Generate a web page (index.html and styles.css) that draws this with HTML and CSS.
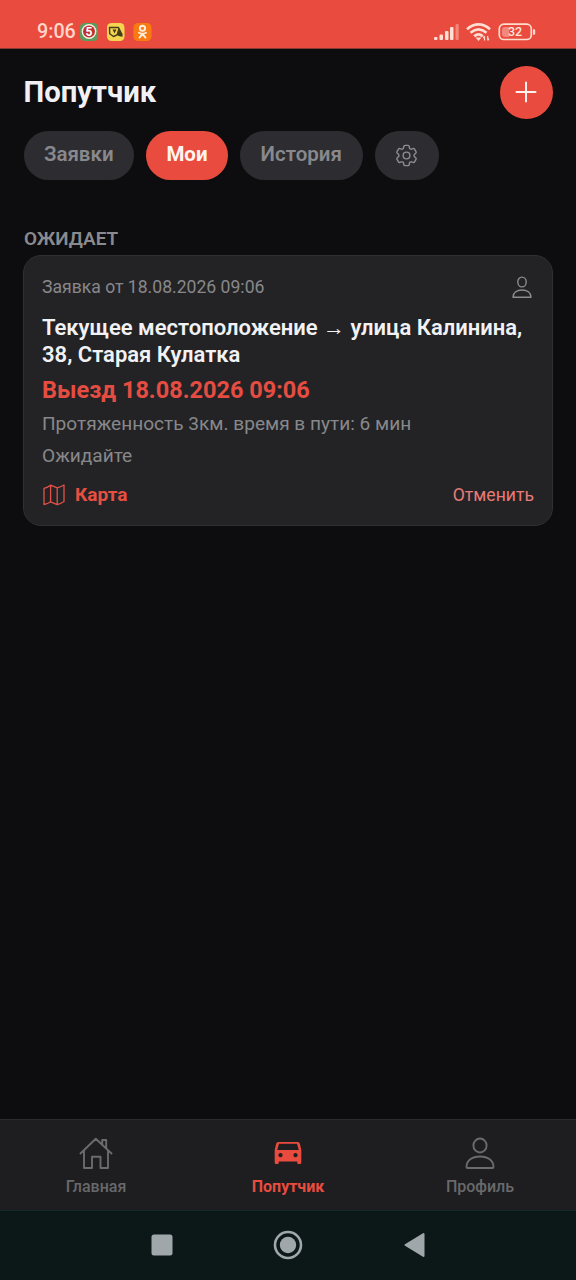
FILE: index.html
```html
<!DOCTYPE html>
<html lang="ru">
<head>
<meta charset="utf-8">
<title>Попутчик</title>
<link rel="stylesheet" href="styles.css">
</head>
<body>
<div class="screen">
  <div class="status">
    <span class="clock">9:06</span>
    <svg class="notices" width="72" height="18" viewBox="0 0 72 18">
      <rect width="18" height="18" rx="4.500" fill="#5c9a5d"/>
      <circle cx="9" cy="8.500" r="7.400" fill="#fbeede"/>
      <circle cx="9" cy="8.500" r="6" fill="#bd3034"/>
      <text x="9" y="12.800" class="five">5</text>
      <rect x="27" width="17.500" height="18" rx="4.500" fill="#f5d550"/>
      <path d="M29.500 4.500h9l3.500 7-5 .3-3.500 1.700-3.800-2.700z" fill="none" stroke="#443d16" stroke-width="1.400" stroke-linejoin="round"/>
      <path d="M38.500 5l4.500 8.500h-3l-3.500-2zM32.500 6.500h4l-2 4z" fill="#443d16"/>
      <rect x="53.500" width="18" height="18" rx="4.500" fill="#f97a12"/>
      <circle cx="62.500" cy="5.300" r="2.600" fill="none" stroke="#fff0df" stroke-width="1.900"/>
      <path d="M59 9.800q3.500 2 7 0M62.500 11l-3 3.600M62.500 11l3 3.600" fill="none" stroke="#fff0df" stroke-width="1.900" stroke-linecap="round"/>
    </svg>
    <svg class="signals" width="104" height="20" viewBox="0 0 104 20">
      <g fill="#ffded3">
        <rect x="1" y="14" width="3.500" height="3" rx="1"/>
        <rect x="6.500" y="11.500" width="3.500" height="5.500" rx="1"/>
        <rect x="12" y="8" width="3.500" height="9" rx="1"/>
        <rect x="17" y="4" width="3.500" height="13" rx="1"/>
        <rect x="22.500" y="1" width="3.200" height="16" rx="1" opacity=".4"/>
      </g>
      <g fill="none" stroke="#ffded3" stroke-width="2.700">
        <path d="M34 6.200q11.500-9.500 23 0"/>
        <path d="M37.500 9.800q8-6.700 16 0"/>
        <path d="M41.200 13.200q4.300-3.800 8.600 0"/>
      </g>
      <path d="M42.500 14.500h6l-3 3.500z" fill="#ffded3"/>
      <path d="M51.500 17.500v-4M54.700 13v4M50.200 15l1.300-1.800M56 15.700l-1.300 1.800" fill="none" stroke="#ffded3" stroke-width="1.200"/>
      <rect x="66.300" y="1.200" width="32" height="15.300" rx="4.500" fill="none" stroke="#ffdccd" stroke-width="1.700"/>
      <path d="M72 4h4v10h-4q-3 0-3-3V7q0-3 3-3z" fill="#f4877b"/>
      <path d="M100 6.200h1q1.200 0 1.200 1.200v3.200q0 1.200-1.200 1.200h-1z" fill="#ffdccd"/>
      <text x="82" y="13.300" class="charge">32</text>
    </svg>
  </div>

  <div class="header">
    <h1 class="title">Попутчик</h1>
    <button class="add" aria-label="Добавить">
      <svg width="22" height="22" viewBox="0 0 22 22"><path d="M11 1.500v19M1.500 11h19" stroke="#fff1ed" stroke-width="2" stroke-linecap="round"/></svg>
    </button>
  </div>

  <div class="chips">
    <button class="chip requests">Заявки</button>
    <button class="chip mine">Мои</button>
    <button class="chip history">История</button>
    <button class="chip settings" aria-label="Настройки">
      <svg width="27" height="27" viewBox="0 0 24 24" fill="none" stroke="#8d8d92" stroke-width="1.250" stroke-linejoin="round"><path d="M9.594 3.940c.09-.542.56-.94 1.110-.94h2.593c.55 0 1.020.398 1.110.94l.213 1.281c.063.374.313.686.645.87.074.04.147.083.22.127.325.196.72.257 1.075.124l1.217-.456a1.125 1.125 0 0 1 1.370.49l1.296 2.247a1.125 1.125 0 0 1-.26 1.431l-1.003.827c-.293.241-.438.613-.43.992a7.723 7.723 0 0 1 0 .255c-.008.378.137.75.43.991l1.004.827c.424.35.534.955.26 1.430l-1.298 2.247a1.125 1.125 0 0 1-1.369.491l-1.217-.456c-.355-.133-.75-.072-1.076.124a6.470 6.470 0 0 1-.22.128c-.331.183-.581.495-.644.869l-.213 1.281c-.09.543-.56.94-1.110.94h-2.594c-.55 0-1.019-.398-1.110-.94l-.213-1.281c-.062-.374-.312-.686-.644-.87a6.520 6.520 0 0 1-.22-.127c-.325-.196-.72-.257-1.076-.124l-1.217.456a1.125 1.125 0 0 1-1.369-.49l-1.297-2.247a1.125 1.125 0 0 1 .26-1.431l1.004-.827c.292-.24.437-.613.43-.991a6.932 6.932 0 0 1 0-.255c.007-.38-.138-.751-.43-.992l-1.004-.827a1.125 1.125 0 0 1-.26-1.430l1.297-2.247a1.125 1.125 0 0 1 1.370-.491l1.216.456c.356.133.751.072 1.076-.124.072-.044.146-.086.22-.128.332-.183.582-.495.644-.869l.214-1.280Z"/><circle cx="12" cy="12" r="3"/></svg>
    </button>
  </div>

  <main class="content">
    <h2 class="section">ОЖИДАЕТ</h2>
    <article class="card">
      <div class="card-top">
        <span class="date">Заявка от 18.08.2026 09:06</span>
        <svg class="person" width="20" height="23" viewBox="0 0 20 23" fill="none" stroke="#8c8c90" stroke-width="1.400" stroke-linejoin="round"><ellipse cx="10" cy="6" rx="4.200" ry="4.900"/><path d="M1 21.300C1 16.500 5 14 10 14s9 2.500 9 7.300z"/></svg>
      </div>
      <div class="route"><div>Текущее местоположение → улица Калинина,</div><div>38, Старая Кулатка</div></div>
      <div class="depart">Выезд 18.08.2026 09:06</div>
      <div class="info">Протяженность 3км. время в пути: 6 мин</div>
      <div class="info wait">Ожидайте</div>
      <div class="actions">
        <span class="map">
          <svg width="22" height="22" viewBox="0 0 22 22" fill="none" stroke="#e25248" stroke-width="1.300" stroke-linejoin="round"><path d="M1 4.300q3.700-.8 6.600-3.100l6.600 2.700Q17.500 3 21 1v16.500q-3.500 2.300-6.800 3.200l-6.600-2.900Q4.500 20 1 20.500zM7.600 1.200v16.600M14.200 3.900v16.800"/></svg>
          <span class="map-label">Карта</span>
        </span>
        <span class="cancel">Отменить</span>
      </div>
    </article>
  </main>

  <nav class="tabs">
    <div class="tab">
      <svg width="34" height="34" viewBox="0 0 34 34" fill="none" stroke="#6b6b6e" stroke-width="1.900" stroke-linejoin="round" stroke-linecap="round"><path d="M1.500 17.500L16.800 2.700 32.500 17.500M5 14.500v17.500h8V20.800h8.500v11.200H29V14.500M23.200 8v-4h4V12.500"/></svg>
      <span class="tab-label home">Главная</span>
    </div>
    <div class="tab active">
      <svg width="34" height="34" viewBox="0 0 34 34"><path fill="#e94c3e" fill-rule="evenodd" d="M7.300 6h19.400q1.600 0 2.100 1.500L30.300 14V26.500q0 1.500-1.300 1.500h-1.500q-1.300 0-1.300-1.500V25.500H7.800v1q0 1.500-1.300 1.500H5q-1.300 0-1.300-1.500V14L5.200 7.500Q5.700 6 7.300 6zM8 7.800L6.200 14h21.600L26 7.800zM9.500 17a2.100 2.100 0 1 0 .01 0zM24.500 17a2.100 2.100 0 1 0 .01 0z"/></svg>
      <span class="tab-label">Попутчик</span>
    </div>
    <div class="tab">
      <svg width="34" height="34" viewBox="0 0 34 34" fill="none" stroke="#6b6b6e" stroke-width="1.900" stroke-linejoin="round"><ellipse cx="17" cy="9.500" rx="6.600" ry="7"/><path d="M3.500 31C3.500 24.500 9 20.500 17 20.500s13.500 4 13.500 10.500q0 1-1 1h-25q-1 0-1-1z"/></svg>
      <span class="tab-label profile">Профиль</span>
    </div>
  </nav>

  <div class="system">
    <svg width="22" height="30" viewBox="0 0 22 30"><rect x=".500" y="4.500" width="21" height="21" rx="2.500" fill="#a0a7aa"/></svg>
    <svg width="30" height="30" viewBox="0 0 30 30"><circle cx="15" cy="15" r="13" fill="none" stroke="#a0a7aa" stroke-width="2.600"/><circle cx="15" cy="15" r="8.200" fill="#a0a7aa"/></svg>
    <svg width="22" height="30" viewBox="0 0 22 30"><path d="M2.500 15L20.500 4v22z" fill="#a0a7aa" stroke="#a0a7aa" stroke-width="2" stroke-linejoin="round"/></svg>
  </div>
</div>
</body>
</html>
```
FILE: styles.css
```css
* { box-sizing: border-box; }
body { margin: 0; background: #0d0d0f; font-family: Roboto, "Noto Sans", sans-serif; }
h1, h2 { margin: 0; }
svg { display: block; flex: none; }
button { border: 0; padding: 0; margin: 0; font: inherit; }
.screen { width: 576px; height: 1280px; display: flex; flex-direction: column; white-space: nowrap; overflow: hidden; }

.status { height: 49px; flex: none; background: #e94c3e; border-bottom: 1px solid #8a3932; display: flex; align-items: flex-start; padding: 21px 39px 0 37px; }
.clock { font-size: 19.700px; line-height: 22px; color: #ffd6c9; width: 43px; font-weight: 500; }
.notices { margin-top: 2px; }
.signals { margin: 2px 0 0 auto; }
.five { font: bold 12px Roboto, sans-serif; fill: #fff; text-anchor: middle; }
.charge { font: 500 12.500px Roboto, sans-serif; fill: #ffe6dc; text-anchor: middle; }

.header { flex: none; display: flex; align-items: center; justify-content: space-between; padding: 17px 23.500px 0 23.500px; }
.title { font-size: 29.300px; line-height: 36px; font-weight: 700; color: #f1f1f5; position: relative; top: -1px; }
.add { width: 53px; height: 53px; border-radius: 50%; background: #e94c3e; display: flex; align-items: center; justify-content: center; padding: 0 1px 1px 0; }

.chips { flex: none; display: flex; gap: 12px; padding: 12px 23.500px 0; }
.chip { height: 49px; border-radius: 25px; background: #2d2d31; color: #88888d; font-size: 20.500px; font-weight: 600; display: flex; align-items: center; justify-content: center; padding-bottom: 3px; }
.requests { width: 110.500px; }
.mine { width: 82px; background: #e94c3e; color: #fff4ef; font-weight: 700; }
.history { width: 122.500px; }
.settings { width: 64px; padding: 0; }

.content { flex: 1; padding: 47px 23px 0; }
.section { font-size: 18.900px; line-height: 23px; font-weight: 600; color: #8b8b8f; padding-left: 1px; }
.card { margin-top: 5px; height: 271px; background: #232325; border: 1px solid #303033; border-radius: 18px; padding: 19px 18px 0; }
.card-top { display: flex; justify-content: space-between; height: 39px; }
.date { font-size: 17.600px; line-height: 24px; color: #88888b; }
.person { margin: 1px 2px 0 0; }
.route { font-size: 22px; line-height: 27px; font-weight: 600; color: #f2f2f5; }
.depart { font-size: 23.500px; line-height: 30px; font-weight: 700; color: #e54d42; margin-top: 7px; }
.info { font-size: 19.080px; line-height: 24px; color: #88888b; margin-top: 7px; }
.wait { margin-top: 8px; }
.actions { display: flex; justify-content: space-between; align-items: center; margin-top: 15px; }
.map { display: flex; align-items: center; gap: 10px; padding-left: 1px; }
.map-label { font-size: 19px; line-height: 24px; font-weight: 700; color: #e74f42; }
.cancel { font-size: 17.600px; line-height: 24px; color: #e87b78; }

.tabs { flex: none; height: 91px; background: #1e1e20; border-top: 1px solid #2d2d30; display: grid; grid-template-columns: repeat(3, 1fr); }
.tab { display: flex; flex-direction: column; align-items: center; padding-top: 16px; gap: 7px; color: #69696c; }
.tab-label { font-size: 16px; line-height: 20px; font-weight: 500; }
.active { color: #e94c3e; }
.active .tab-label { font-weight: 700; }
.system { flex: none; height: 70px; background: #0c1718; border-top: 1px solid #17272a; display: flex; align-items: center; justify-content: center; gap: 100px; padding-bottom: 1px; }
```
